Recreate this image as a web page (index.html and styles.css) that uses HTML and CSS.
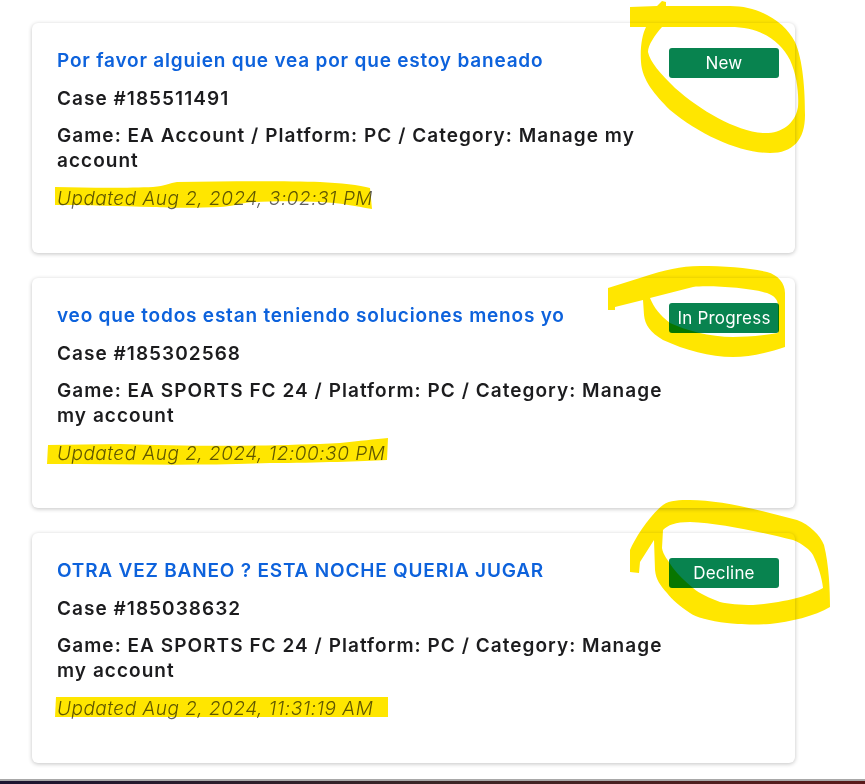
FILE: index.html
```html
<!DOCTYPE html>
<html lang="en">
<head>
<meta charset="utf-8">
<title>Cases</title>
<link rel="stylesheet" href="styles.css">
</head>
<body>
<main class="list">
  <article class="card">
    <div class="info">
      <a class="title" href="#">Por favor alguien que vea por que estoy baneado</a>
      <p class="line">Case #185511491</p>
      <p class="line">Game: EA Account / Platform: PC / Category: Manage my account</p>
      <p class="updated">Updated Aug 2, 2024, 3:02:31 PM</p>
    </div>
    <span class="badge">New</span>
  </article>
  <article class="card">
    <div class="info">
      <a class="title" href="#">veo que todos estan teniendo soluciones menos yo</a>
      <p class="line">Case #185302568</p>
      <p class="line">Game: EA SPORTS FC 24 / Platform: PC / Category: Manage my account</p>
      <p class="updated">Updated Aug 2, 2024, 12:00:30 PM</p>
    </div>
    <span class="badge">In Progress</span>
  </article>
  <article class="card">
    <div class="info">
      <a class="title" href="#">OTRA VEZ BANEO ? ESTA NOCHE QUERIA JUGAR</a>
      <p class="line">Case #185038632</p>
      <p class="line">Game: EA SPORTS FC 24 / Platform: PC / Category: Manage my account</p>
      <p class="updated">Updated Aug 2, 2024, 11:31:19 AM</p>
    </div>
    <span class="badge">Decline</span>
  </article>
</main>
<div class="taskbar"></div>
<svg class="marker" viewBox="0 0 865 784" width="865" height="784" aria-hidden="true">
  <path fill-rule="evenodd" d="M630 7L657 6L662 1L666 2V6H730C760 6 785 22 795 42C803 60 805 90 805 115C805 140 793 153 770 153C740 153 700 135 670 110C655 95 642 80 641 62C640 48 642 35 646 27H630ZM662 27H730C760 27 780 40 790 60C797 75 799 95 798 107C795 125 780 134 763 133C735 131 700 110 675 88C660 73 650 62 648 52C648 45 655 35 662 27Z"/>
  <path fill-rule="evenodd" d="M608 288L643 277C665 270 680 266 700 266C725 266 750 268 767 272C778 275 785 283 785 293V347C770 352 750 357 733 357C710 357 685 350 663 340C650 332 645 325 644 315L643 300L615 307V310H608ZM650 298L693 287C710 285 750 288 767 293C775 296 778 300 778 306V333C760 336 745 337 733 337C710 337 685 330 670 323C660 315 654 308 650 298Z"/>
  <path fill-rule="evenodd" d="M630 550C635 538 650 515 663 505C670 500 680 500 690 500C720 500 760 510 797 520C810 525 820 535 824 545C829 565 830 590 830 607C815 616 790 622 770 624C750 625 735 624 727 623C710 621 695 617 690 613C680 606 672 600 667 593C660 585 656 580 655 570L654 540L640 562L639 573L630 572ZM663 530C668 525 675 522 690 522C720 523 760 532 793 540C803 544 810 550 813 555C818 565 822 578 823 588C810 595 790 602 753 605C740 605 728 604 720 602C710 598 700 594 693 588C685 581 678 575 673 568C668 560 663 555 662 548Z"/>
  <path d="M55 187C90 188 130 188 153 187C165 186 170 183 177 182C230 181 290 181 320 182C340 183 360 185 370 188L372 209C355 206 340 203 320 202C300 201 275 201 253 202C240 203 230 207 220 207C200 208 170 208 153 207C120 206 85 205 55 205Z"/>
  <path d="M48 445L120 444C200 447 280 446 340 443C360 441 375 439 388 438L387 460C360 461 320 463 270 463C200 466 120 464 47 464Z"/>
  <path d="M56 697H388V717H55Z"/>
</svg>
</body>
</html>
```
FILE: styles.css
```css
* { box-sizing: border-box; }
html, body { margin: 0; height: 784px; overflow: hidden; background: #fff; }
body {
  position: relative;
  display: flex;
  flex-direction: column;
  font-family: Inter, "Liberation Sans", sans-serif;
  color: #1c1c1e;
}
.list {
  flex: 1;
  display: flex;
  flex-direction: column;
  gap: 25px;
  padding: 23px 70px 0 32px;
}
.card {
  height: 230px;
  display: flex;
  justify-content: space-between;
  align-items: flex-start;
  padding: 25px 16px 0 25px;
  background: #fff;
  border-radius: 6px;
  box-shadow: 0 1px 4px rgba(0, 0, 0, 0.24);
}
.info { width: 612px; }
.title {
  display: block;
  font-size: 19px;
  line-height: 25px;
  font-weight: 600;
  letter-spacing: 0.8px;
  color: #0d62dc;
  text-decoration: none;
}
.line {
  margin: 13px 0 0;
  font-size: 19px;
  line-height: 25px;
  font-weight: 600;
  letter-spacing: 1.04px;
}
.line + .line { margin-top: 12px; }
.updated {
  margin: 13px 0 0;
  font-size: 19px;
  line-height: 25px;
  font-style: italic;
  font-weight: 300;
  letter-spacing: 0.5px;
  color: #606060;
}
.badge {
  flex: none;
  width: 110px;
  height: 30px;
  display: flex;
  align-items: center;
  justify-content: center;
  font-size: 17px;
  letter-spacing: 0.2px;
  color: #fff;
  background: #08834f;
  border-radius: 3px;
}
.taskbar {
  flex: none;
  height: 5px;
  background: linear-gradient(#a8a8a8 0 40%, transparent 40%), linear-gradient(90deg, #1b1430, #3a2626 50%, #5a1a1a);
}
.marker {
  position: absolute;
  left: 0;
  top: 0;
  fill: #ffe600;
  mix-blend-mode: multiply;
  pointer-events: none;
}
```
